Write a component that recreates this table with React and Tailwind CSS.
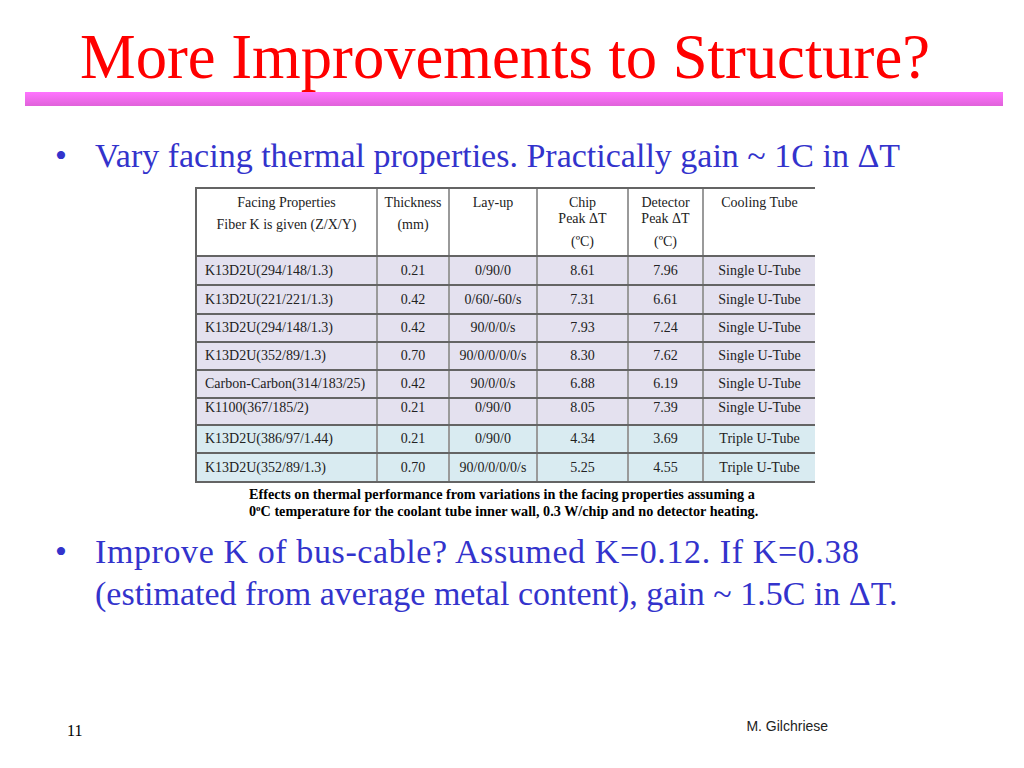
import React from "react";

const COLS = "grid grid-cols-[179px_72px_88px_91px_75px_113px]";

const rows = [
  { c: ["K13D2U(294/148/1.3)", "0.21", "0/90/0", "8.61", "7.96", "Single U-Tube"], h: "h-[29px]", bg: "bg-[#e4e1ef]" },
  { c: ["K13D2U(221/221/1.3)", "0.42", "0/60/-60/s", "7.31", "6.61", "Single U-Tube"], h: "h-[29px]", bg: "bg-[#e4e1ef]" },
  { c: ["K13D2U(294/148/1.3)", "0.42", "90/0/0/s", "7.93", "7.24", "Single U-Tube"], h: "h-[28px]", bg: "bg-[#e4e1ef]" },
  { c: ["K13D2U(352/89/1.3)", "0.70", "90/0/0/0/0/s", "8.30", "7.62", "Single U-Tube"], h: "h-[28px]", bg: "bg-[#e4e1ef]" },
  { c: ["Carbon-Carbon(314/183/25)", "0.42", "90/0/0/s", "6.88", "6.19", "Single U-Tube"], h: "h-[28px]", bg: "bg-[#e4e1ef]" },
  { c: ["K1100(367/185/2)", "0.21", "0/90/0", "8.05", "7.39", "Single U-Tube"], h: "h-[27px]", bg: "bg-[#e4e1ef]", top: true },
  { c: ["K13D2U(386/97/1.44)", "0.21", "0/90/0", "4.34", "3.69", "Triple U-Tube"], h: "h-[28px]", bg: "bg-[#d9ebf1]" },
  { c: ["K13D2U(352/89/1.3)", "0.70", "90/0/0/0/0/s", "5.25", "4.55", "Triple U-Tube"], h: "h-[29px]", bg: "bg-[#d9ebf1]" },
];

function Row({ r }) {
  const align = r.top ? "items-start pt-[1px]" : "items-center";
  return (
    <div className={`${COLS} ${r.h} ${r.bg} border-t-2 border-[#646464]`}>
      {r.c.map((t, i) => (
        <div
          key={i}
          className={`flex ${align} leading-[16px] ${i === 0 ? "justify-start pl-[8px]" : "justify-center border-l-2 border-[#9a9a9a]"} whitespace-nowrap`}
        >
          {t}
        </div>
      ))}
    </div>
  );
}

function Header() {
  const cell = "flex flex-col items-center pt-[6px] leading-[16px]";
  return (
    <div className={`${COLS} h-[68px] bg-white border-t-2 border-[#646464]`}>
      <div className={cell}>
        <div>Facing Properties</div>
        <div className="mt-[6px]">Fiber K is given (Z/X/Y)</div>
      </div>
      <div className={`${cell} border-l-2 border-[#9a9a9a]`}>
        <div>Thickness</div>
        <div className="mt-[6px]">(mm)</div>
      </div>
      <div className={`${cell} border-l-2 border-[#9a9a9a]`}>
        <div>Lay-up</div>
      </div>
      <div className={`${cell} border-l-2 border-[#9a9a9a]`}>
        <div>Chip</div>
        <div>Peak ΔT</div>
        <div className="mt-[7px]">(ºC)</div>
      </div>
      <div className={`${cell} border-l-2 border-[#9a9a9a]`}>
        <div>Detector</div>
        <div>Peak ΔT</div>
        <div className="mt-[7px]">(ºC)</div>
      </div>
      <div className={`${cell} border-l-2 border-[#9a9a9a]`}>
        <div>Cooling Tube</div>
      </div>
    </div>
  );
}

export default function App() {
  return (
    <div
      className="w-[1024px] h-[768px] bg-white flex flex-col overflow-hidden"
      style={{ fontFamily: '"Liberation Serif", "Times New Roman", serif' }}
    >
      {/* Title */}
      <div className="pt-[26px] pl-[80px] text-[62.6px] leading-[62px] text-[#ff0000] whitespace-nowrap">
        More Improvements to Structure?
      </div>
      <div className="mt-[4px] ml-[25px] w-[978px] h-[14px] bg-gradient-to-b from-[#ff74ff] to-[#e062da]" />

      {/* Bullet 1 */}
      <div className="mt-[33px] flex text-[34px] leading-[34px] text-[#3333cc]">
        <span className="w-[95px] pl-[55px] shrink-0">•</span>
        <span className="whitespace-nowrap">Vary facing thermal properties. Practically gain ~ 1C in ΔT</span>
      </div>

      {/* Table */}
      <div className="mt-[14px] ml-[195px] w-[620px] text-[14px] text-[#222]">
        <div className="border-l-2 border-[#646464] border-b-2 border-b-[#646464]">
          <Header />
          {rows.map((r, i) => (
            <Row key={i} r={r} />
          ))}
        </div>
      </div>

      {/* Caption */}
      <div className="mt-[3px] ml-[249px] text-[14.2px] leading-[17px] font-bold text-black whitespace-nowrap">
        <div>Effects on thermal performance from variations in the facing properties assuming a</div>
        <div>
          0<span className="relative -top-[5px] text-[9px] leading-none">o</span>C temperature for the coolant tube inner wall, 0.3 W/chip and no detector heating.
        </div>
      </div>

      {/* Bullet 2 */}
      <div className="mt-[11px] flex text-[34px] leading-[42px] text-[#3333cc]">
        <span className="w-[95px] pl-[55px] shrink-0">•</span>
        <div className="whitespace-nowrap">
          <div className="tracking-[0.6px]">Improve K of bus-cable? Assumed K=0.12. If K=0.38</div>
          <div>(estimated from average metal content), gain ~ 1.5C in ΔT.</div>
        </div>
      </div>

      {/* Footer */}
      <div className="mt-auto mb-[28px] flex items-end">
        <div className="ml-[67px] text-[16px] leading-[18px] text-black">11</div>
        <div
          className="ml-[664px] mb-[6px] text-[14px] leading-[15px] text-[#222]"
          style={{ fontFamily: '"Liberation Sans", Arial, sans-serif' }}
        >
          M. Gilchriese
        </div>
      </div>
    </div>
  );
}
